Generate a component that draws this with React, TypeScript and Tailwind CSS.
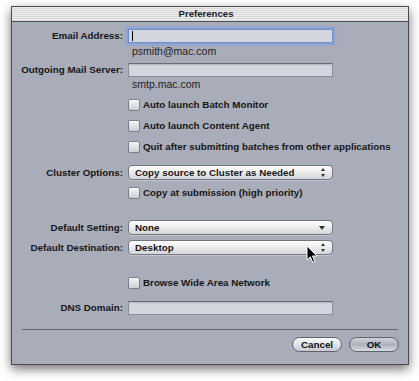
import React from "react";

const LABEL = "w-[111px] shrink-0 text-right font-bold text-[9.8px] text-[#161616] leading-none";

function Row({ label, className, children }: { label: string; className: string; children: React.ReactNode }) {
    return (
        <div className={`flex items-center ${className}`}>
            <div className={LABEL}>{label}</div>
            <div className="ml-[5px] w-[205px]">{children}</div>
        </div>
    );
}

function Field({ focused = false }: { focused?: boolean }) {
    return (
        <div
            className={`relative h-[14px] bg-[#d3d6df] border ${
                focused
                    ? "border-[#6f8fcc] shadow-[0_0_2px_2px_rgba(120,155,225,0.75)]"
                    : "border-[#8a8d97] border-t-[#686c75] shadow-[inset_0_1px_1px_rgba(0,0,0,0.15)]"
            }`}
        >
            {focused && <div className="absolute left-[3px] top-[1px] h-[10px] w-px bg-black" />}
        </div>
    );
}

function Hint({ text, className }: { text: string; className: string }) {
    return (
        <div className={`flex ${className}`}>
            <div className="ml-[120px] text-[10.5px] leading-[12px] text-[#1e1e1e]">{text}</div>
        </div>
    );
}

function Check({ label, className }: { label: string; className: string }) {
    return (
        <div className={`flex items-center ml-[116px] h-[12px] ${className}`}>
            <span className="w-[12px] h-[12px] shrink-0 rounded-[2px] border border-[#7b7e88] bg-gradient-to-b from-[#f4f4f4] to-[#cdd0d6] shadow-[inset_0_1px_0_#fff]" />
            <span className="ml-[3px] font-bold text-[9.8px] leading-none text-[#161616] whitespace-nowrap">{label}</span>
        </div>
    );
}

function Popup({ value, single = false }: { value: string; single?: boolean }) {
    return (
        <div className="h-[15px] rounded-[4px] border border-[#737781] bg-gradient-to-b from-[#fefefe] via-[#ececec] to-[#d3d5da] flex items-center justify-between pl-[6px] pr-[7px] shadow-[0_1px_0_rgba(255,255,255,0.3)]">
            <span className="font-bold text-[9.8px] leading-none text-[#161616]">{value}</span>
            {single ? (
                <svg width="6" height="4" viewBox="0 0 6 4">
                    <path d="M0 0 L6 0 L3 4 Z" fill="#333" />
                </svg>
            ) : (
                <svg width="4" height="9" viewBox="0 0 4 9">
                    <path d="M0 3 L4 3 L2 0 Z" fill="#333" />
                    <path d="M0 6 L4 6 L2 9 Z" fill="#333" />
                </svg>
            )}
        </div>
    );
}

function Button({ label, primary = false }: { label: string; primary?: boolean }) {
    return (
        <div
            className={`w-[50px] h-[15px] rounded-full border border-[#5e626b] flex items-center justify-center font-bold text-[9.8px] leading-none text-[#111] ${
                primary
                    ? "bg-gradient-to-b from-[#d0d3da] via-[#aeb2bc] to-[#d9dce3]"
                    : "bg-gradient-to-b from-[#fbfbfb] via-[#e1e3e8] to-[#c6c9d2]"
            }`}
        >
            {label}
        </div>
    );
}

export default function App() {
    return (
        <div className="relative w-[419px] h-[381px] overflow-hidden bg-white pt-[6px] pl-[11px] font-['Liberation_Sans',Arial,sans-serif]">
            <div className="w-[398px] border border-[#4b4b4b] bg-[#a9adba] shadow-[0_4px_10px_rgba(0,0,0,0.55)]">
                {/* Title bar */}
                <div className="h-[15px] border-b border-[#4f525a] bg-[repeating-linear-gradient(to_bottom,#ececec_0px,#ececec_1px,#d9d9d9_1px,#d9d9d9_2px)] flex items-center justify-center">
                    <span className="font-bold text-[9.6px] leading-none text-[#1c1c1c] -ml-[8px]">Preferences</span>
                </div>

                {/* Body */}
                <div className="flex flex-col pt-[7px] pb-[12px]">
                    <Row label="Email Address:" className="">
                        <Field focused />
                    </Row>
                    <Hint text="psmith@mac.com" className="mt-[2px]" />
                    <Row label="Outgoing Mail Server:" className="mt-[6px]">
                        <Field />
                    </Row>
                    <Hint text="smtp.mac.com" className="mt-px" />

                    <Check label="Auto launch Batch Monitor" className="mt-[9px]" />
                    <Check label="Auto launch Content Agent" className="mt-[9px]" />
                    <Check label="Quit after submitting batches from other applications" className="mt-[9px]" />

                    <Row label="Cluster Options:" className="mt-[12px]">
                        <Popup value="Copy source to Cluster as Needed" />
                    </Row>
                    <Check label="Copy at submission (high priority)" className="mt-[7px]" />

                    <Row label="Default Setting:" className="mt-[21px]">
                        <Popup value="None" single />
                    </Row>
                    <Row label="Default Destination:" className="mt-[5px]">
                        <Popup value="Desktop" />
                    </Row>

                    <Check label="Browse Wide Area Network" className="mt-[22px]" />

                    <Row label="DNS Domain:" className="mt-[12px]">
                        <Field />
                    </Row>

                    <div className="mx-[10px] mt-[14px] h-px bg-[#656a77]" />

                    <div className="flex justify-end gap-[7px] pr-[9px] mt-[7px]">
                        <Button label="Cancel" />
                        <Button label="OK" primary />
                    </div>
                </div>
            </div>

            {/* Mouse pointer */}
            <svg className="absolute left-[306px] top-[245px]" width="12" height="19" viewBox="0 0 12 19">
                <path d="M1 1 L1 15 L4.3 11.8 L6.7 17.3 L8.8 16.4 L6.5 11 L11 11 Z" fill="#000" stroke="#fff" strokeWidth="1" strokeLinejoin="round" />
            </svg>
        </div>
    );
}
